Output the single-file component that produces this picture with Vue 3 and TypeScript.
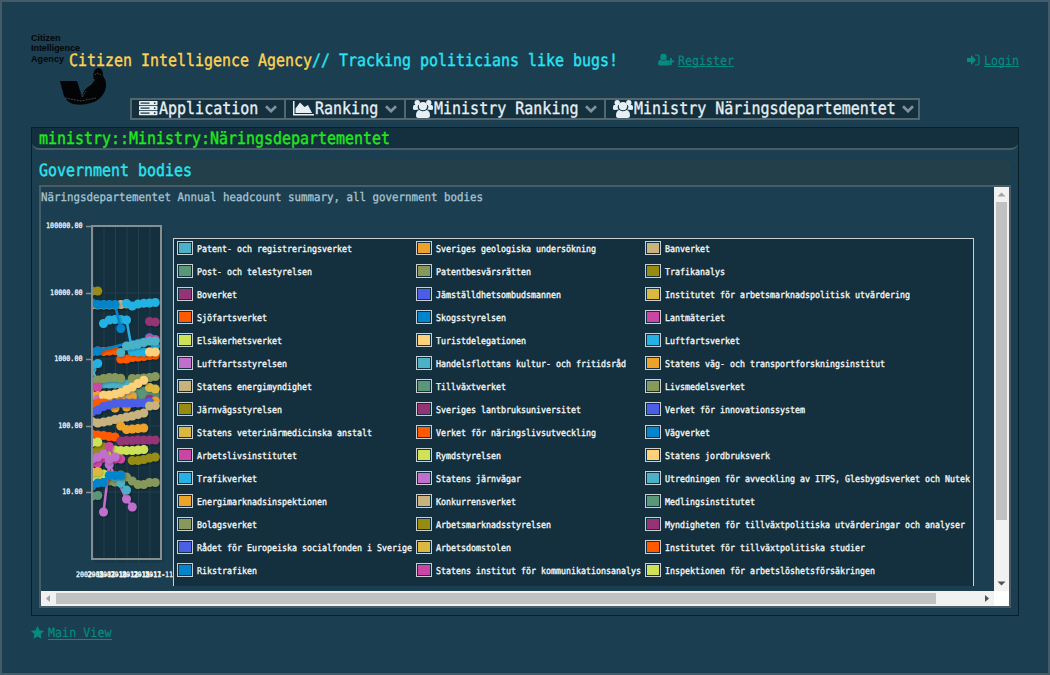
<script setup lang="ts">
import { h, type FunctionalComponent } from 'vue'

interface MonoProps { t: string; a: number; s: number; b?: number; y?: number; hgt?: number }

// Condensed monospace run: every character advances by exactly `a` pixels.
const Mono: FunctionalComponent<MonoProps> = (p) => {
  const w = p.t.length * p.a
  const height = p.hgt ?? 20
  return h('svg', { width: w, height, viewBox: `0 0 ${w} ${height}`, style: 'display:block;overflow:visible;flex:none' }, [
    h('text', {
      x: 0, y: p.y ?? 15, textLength: w, lengthAdjust: 'spacingAndGlyphs', fill: 'currentColor',
      stroke: 'currentColor', 'stroke-width': p.b ?? 0, 'font-size': p.s,
      'font-family': "'DejaVu Sans Mono', 'Liberation Mono', monospace", style: 'white-space:pre',
      'text-rendering': 'geometricPrecision',
    }, p.t),
  ])
}
Mono.props = ['t', 'a', 's', 'b', 'y', 'hgt']

const menu = [
  { label: 'Application', icon: 'server', w: 154 },
  { label: 'Ranking', icon: 'area', w: 120 },
  { label: 'Ministry Ranking', icon: 'group', w: 200 },
  { label: 'Ministry Näringsdepartementet', icon: 'group', w: 312 },
]

const palette = ['#4bb1c6', '#eda229', '#c8b37d', '#5a9678', '#86985a', '#968c12', '#943476', '#4b5ee6', '#dbb840', '#ff5a00', '#0285cd', '#cb46a4', '#cfe255', '#fdd07a', '#24b1e3', '#c070cc', '#4bb1c6', '#eda229', '#c8b37d', '#5a9678', '#86985a', '#968c12', '#943476', '#4b5ee6', '#dbb840', '#ff5a00', '#0285cd', '#cb46a4', '#cfe255', '#fdd07a', '#24b1e3', '#c070cc', '#4bb1c6', '#eda229', '#c8b37d', '#5a9678', '#86985a', '#968c12', '#943476', '#4b5ee6', '#dbb840', '#ff5a00', '#0285cd', '#cb46a4', '#cfe255']
const names = [
  'Patent- och registreringsverket', 'Sveriges geologiska undersökning', 'Banverket',
  'Post- och telestyrelsen', 'Patentbesvärsrätten', 'Trafikanalys',
  'Boverket', 'Jämställdhetsombudsmannen', 'Institutet för arbetsmarknadspolitisk utvärdering',
  'Sjöfartsverket', 'Skogsstyrelsen', 'Lantmäteriet',
  'Elsäkerhetsverket', 'Turistdelegationen', 'Luftfartsverket',
  'Luftfartsstyrelsen', 'Handelsflottans kultur- och fritidsråd', 'Statens väg- och transportforskningsinstitut',
  'Statens energimyndighet', 'Tillväxtverket', 'Livsmedelsverket',
  'Järnvägsstyrelsen', 'Sveriges lantbruksuniversitet', 'Verket för innovationssystem',
  'Statens veterinärmedicinska anstalt', 'Verket för näringslivsutveckling', 'Vägverket',
  'Arbetslivsinstitutet', 'Rymdstyrelsen', 'Statens jordbruksverk',
  'Trafikverket', 'Statens järnvägar', 'Utredningen för avveckling av ITPS, Glesbygdsverket och Nutek',
  'Energimarknadsinspektionen', 'Konkurrensverket', 'Medlingsinstitutet',
  'Bolagsverket', 'Arbetsmarknadsstyrelsen', 'Myndigheten för tillväxtpolitiska utvärderingar och analyser',
  'Rådet för Europeiska socialfonden i Sverige', 'Arbetsdomstolen', 'Institutet för tillväxtpolitiska studier',
  'Rikstrafiken', 'Statens institut för kommunikationsanalys', 'Inspektionen för arbetslöshetsförsäkringen',
]

type Point = [number, number]
const run = (start: number, ...ys: number[]): Point[] => ys.map((y, i) => [start + i, y])
const series: { c: string; p: Point[] }[] = [
  { c: '#968c12', p: run(0, 291, 291) },
  { c: '#c8b37d', p: run(0, 305, 305, 305, 305, 305, 304.5, 304) },
  { c: '#24b1e3', p: run(2, 323.5, 320, 319.5, 319.5, 320, 351.5, 352, 352, 352, 352) },
  { c: '#0285cd', p: run(0, 303, 304.5, 304.5, 304.5, 304.5, 328.5) },
  { c: '#24b1e3', p: run(6, 303.5, 306, 304, 303.3, 303, 302.5) },
  { c: '#943476', p: run(10, 321.5, 322) },
  { c: '#ff5a00', p: run(1, 351, 351.5, 351, 350.5, 359, 359, 357.5, 357, 356.5, 355.5, 355) },
  { c: '#0285cd', p: [[0, 352], [1, 351], [10, 337.5]] },
  { c: '#cb46a4', p: run(10, 338.5, 339.5) },
  { c: '#24b1e3', p: run(7, 351.5, 352, 352) },
  { c: '#24b1e3', p: run(11, 346) },
  { c: '#4bb1c6', p: run(5, 352.5, 346, 345, 344, 342.5, 341, 341) },
  { c: '#fdd07a', p: run(10, 352, 352) },
  { c: '#4bb1c6', p: run(0, 369, 383, 384, 384, 384, 384, 384) },
  { c: '#24b1e3', p: run(0, 365, 363.5) },
  { c: '#86985a', p: run(0, 381, 380, 378.5, 377.5, 377.5, 378.3) },
  { c: '#86985a', p: run(7, 378.5, 378.5, 378, 377.5, 376.5) },
  { c: '#cb46a4', p: run(0, 387, 387) },
  { c: '#5a9678', p: run(5, 399, 397, 395, 393, 391, 392, 394) },
  { c: '#5a9678', p: run(7, 400, 399, 397, 397, 398) },
  { c: '#c8b37d', p: run(5, 400, 398, 396) },
  { c: '#dbb840', p: run(10, 387.5, 389) },
  { c: '#eda229', p: run(0, 395.5, 395.5, 395, 397, 408, 397, 407, 398) },
  { c: '#c070cc', p: run(1, 399.5) },
  { c: '#fdd07a', p: run(2, 395.5, 395, 394, 392.5, 389.5, 387, 383.5, 380.3) },
  { c: '#943476', p: run(10, 399, 401) },
  { c: '#eda229', p: run(11, 401) },
  { c: '#ff5a00', p: run(0, 405, 403, 403) },
  { c: '#4b5ee6', p: run(0, 412, 410, 406.5, 405, 403.5, 403, 403, 403, 403, 403, 402) },
  { c: '#c8b37d', p: run(0, 421.5, 423, 422, 421, 419.5, 418.5, 417, 416, 414.5, 413, 406, 405.5) },
  { c: '#eda229', p: run(5, 426, 429.5, 429, 428.5, 428) },
  { c: '#ff5a00', p: run(0, 434, 435, 435.5, 436.5, 437) },
  { c: '#943476', p: run(5, 441, 440.5, 440.5, 440, 440, 440, 440) },
  { c: '#968c12', p: run(0, 452, 450, 447) },
  { c: '#cfe255', p: run(0, 442.5, 442) },
  { c: '#cfe255', p: run(3, 452, 450, 450.5, 450.5, 450.5, 450, 449.5) },
  { c: '#968c12', p: run(7, 460.5, 460.5, 459.5, 458, 457) },
  { c: '#cb46a4', p: run(0, 463, 463, 458, 446.5, 459, 459) },
  { c: '#cfe255', p: run(0, 477, 476, 474, 475) },
  { c: '#dbb840', p: run(0, 472, 471.5) },
  { c: '#86985a', p: run(3, 481, 482, 475, 477, 481, 484.5, 484.5, 482.5, 482.5) },
  { c: '#c070cc', p: [[2, 512], [3, 464.5], [6, 499], [7, 507]] },
  { c: '#c070cc', p: run(0, 459, 457, 454, 459, 457) },
  { c: '#4bb1c6', p: run(4, 477, 483, 490) },
  { c: '#5a9678', p: run(0, 496, 495.5) },
  { c: '#0285cd', p: run(0, 486, 483, 482.5, 475.5, 475.5, 475.5) },
]
const px = (i: number): number => 92 + 5.75 * i
const line = (p: Point[]): string => p.map(([i, y]) => `${px(i)},${y}`).join(' ')

const yLabels = [
  { t: '100000.00', y: 226 }, { t: '10000.00', y: 293 }, { t: '1000.00', y: 359 }, { t: '100.00', y: 426 }, { t: '10.00', y: 492 },
]
const years = ['2002', '2005', '2007', '2010', '2012', '2015', '2017']
const tickX = [93, 104, 115.5, 127, 138.5, 150, 161.5]
</script>

<template>
  <div class="page">
    <header class="head">
      <svg class="logo" width="80" height="80" viewBox="30 30 80 80">
        <g font-family="'Liberation Sans', Arial, sans-serif" font-weight="bold" font-size="9" fill="#020608">
          <text x="31" y="41" textLength="29.500">Citizen</text>
          <text x="31" y="51.300" textLength="49">Intelligence</text>
          <text x="31" y="61.500" textLength="33">Agency</text>
        </g>
        <path d="M60 81H77L82 97Q84 88 91 85L95 80Q92 77 94 72Q95 68 99 68Q103 69 103 76Q108 83 105 91Q101 99 94 102Q84 106 73 104Q67 102 64 96Z" fill="#020406" />
        <path d="M65 98L81 101L96 98M82 97L86 91M95 75L97 73L101 75" fill="none" stroke="#7e8b8c" stroke-width=".5" stroke-dasharray="2 1" />
      </svg>
      <h1 class="brand"><Mono class="gold" t="Citizen Intelligence Agency" :a="9" :s="17" :b="0.4" /><Mono t="// Tracking politicians like bugs!" :a="9" :s="17" :b="0.4" /></h1>
      <a class="link register">
        <svg width="16" height="14" viewBox="0 0 16 14" fill="currentColor"><circle cx="5.500" cy="4" r="3.200" /><path d="M2.500 6.500Q5.500 9 8.500 6.500Q9.600 7 10 9H11.500V12.500H1.500Q0 12.500 0 10.500Q.2 7 2.500 6.500Z" /><path d="M12 5H13.800V7.500H16V9.300H13.800V12H12V9.300H9.500V7.500H12Z" /></svg>
        <span><Mono t="Register" :a="7" :s="13" :y="12" :hgt="14" :b="0.2" /></span>
      </a>
      <a class="link login">
        <svg width="13" height="14" viewBox="0 0 13 14" fill="currentColor"><path d="M0 5H4V2L9 7L4 12V9H0Z" /><path d="M8 2H10.500Q12 2 12 3.500V10.500Q12 12 10.500 12H8" fill="none" stroke="currentColor" stroke-width="1.200" /></svg>
        <span><Mono t="Login" :a="7" :s="13" :y="12" :hgt="14" :b="0.2" /></span>
      </a>
    </header>

    <nav class="menu">
      <div v-for="m in menu" :key="m.label" class="item" :style="{ width: m.w + 'px' }">
        <svg v-if="m.icon === 'server'" width="20" height="18" viewBox="0 0 20 18"><g v-for="n in 3" :key="n"><rect x="0" :y="n * 5 - 4" width="18.500" height="4.200" rx=".6" fill="#e6eff4" /><path :d="`M1.500 ${n * 5 - 1.900}H10.500`" stroke="#14303e" stroke-width="1.200" /><circle cx="15.700" :cy="n * 5 - 1.900" r=".9" fill="#14303e" /></g></svg>
        <svg v-else-if="m.icon === 'area'" width="22" height="18" viewBox="0 0 22 18" fill="#e6eff4"><path d="M0 1H1.500V14H21V15.500H0Z" /><path d="M2.500 13V8.500L7 2.500L11.500 7L15 5L19 13Z" /></svg>
        <svg v-else width="20.500" height="18" viewBox="0 0 20.500 18" fill="#e6eff4"><circle cx="4.200" cy="2.700" r="2.700" /><circle cx="15.800" cy="2.700" r="2.700" /><path d="M0 9V7Q0 5 1.500 5H5Q4 8 6 9.500L2 10Q0 10 0 9ZM20 9V7Q20 5 18.500 5H15Q16 8 14 9.500L18 10Q20 10 20 9Z" /><circle cx="10" cy="6.200" r="4.100" /><path d="M6.500 10Q10 12.500 13.500 10Q17 10.500 17 15.500Q17 18 14.500 18H5.500Q3 18 3 15.500Q3 10.500 6.500 10Z" /></svg>
        <Mono :t="m.label" :a="9.03" :s="17" :b="0.35" :y="14.5" />
        <svg class="chev" width="12" height="8" viewBox="0 0 12 8"><path d="M1 1.300L6 6.200L11 1.300" fill="none" stroke="#7f929d" stroke-width="2.700" /></svg>
      </div>
    </nav>

    <main class="panel">
      <div class="caption"><Mono t="ministry::Ministry:Näringsdepartementet" :a="9" :s="17" :b="0.4" :y="15.5" /></div>
      <section class="body">
        <h2><Mono t="Government bodies" :a="9" :s="17" :b="0.4" :y="16" /></h2>
        <div class="scroller">
          <div class="view">
            <div class="title"><Mono t="Näringsdepartementet Annual headcount summary, all government bodies" :a="6.5" :s="11.8" :b="0.3" :y="14" /></div>
            <div class="chart">
              <svg width="132" height="379" viewBox="41 207 132 379">
                <defs>
                  <clipPath id="plot"><rect x="92" y="227" width="69" height="331" /></clipPath>
                  <filter id="shade" x="80" y="210" width="95" height="370" filterUnits="userSpaceOnUse"><feDropShadow dx="1" dy="1" stdDeviation="1" flood-color="#000" flood-opacity=".3" /></filter>
                </defs>
                <rect x="94" y="229" width="70" height="334" fill="#15313f" opacity=".55" />
                <rect x="92" y="226" width="69" height="333" fill="#14303e" />
                <path d="M92 293H160M92 359H160M92 426H160M92 492H160" stroke="#223f4a" />
                <path v-for="x in tickX" :key="x" :d="`M${x} 227V566`" stroke="#223f4a" />
                <g clip-path="url(#plot)">
                  <g v-for="(s, k) in series" :key="k" filter="url(#shade)">
                    <polyline :points="line(s.p)" fill="none" :stroke="s.c" stroke-width="2.500" />
                    <circle v-for="[i, y] in s.p" :key="i" :cx="px(i)" :cy="y" r="4.500" :fill="s.c" />
                  </g>
                </g>
                <rect x="92" y="226" width="69" height="333" fill="none" stroke="#878e92" stroke-width="2" />
                <g font-family="'DejaVu Sans Mono', monospace" font-size="7.500" fill="#f0f4f5" stroke="#f0f4f5" stroke-width=".3">
                  <g v-for="l in yLabels" :key="l.t">
                    <path :d="`M86 ${l.y}.5H92`" stroke="#878e92" stroke-width="1.500" />
                    <text :x="82.500 - l.t.length * 4.050" :y="l.y + 2.300" :textLength="l.t.length * 4.050" lengthAdjust="spacingAndGlyphs">{{ l.t }}</text>
                  </g>
                  <text v-for="(y, i) in years" :key="y" :x="76 + i * 11.500" y="577" textLength="32" lengthAdjust="spacingAndGlyphs">{{ y }}-11-</text>
                </g>
              </svg>
              <div class="legend">
                <div v-for="(n, i) in names" :key="n" class="entry">
                  <svg width="16" height="14" viewBox="0 0 16 14"><rect x=".5" y=".5" width="15" height="13" fill="none" stroke="#c9cfd2" /><rect x="2" y="2" width="12" height="10" :fill="palette[i]" /></svg>
                  <Mono :t="n" :a="5" :s="9.4" :b="0.35" :y="11" :hgt="14" />
                </div>
              </div>
            </div>
          </div>
          <div class="vbar">
            <svg width="15" height="15" viewBox="0 0 15 15"><path d="M3.500 9.500L7.500 5.500L11.500 9.500Z" fill="#a3a3a3" /></svg>
            <i />
            <svg width="15" height="15" viewBox="0 0 15 15"><path d="M3.500 5.500L7.500 9.500L11.500 5.500Z" fill="#505050" /></svg>
          </div>
          <div class="hbar">
            <svg width="15" height="15" viewBox="0 0 15 15"><path d="M9 4L5 7.500L9 11Z" fill="#a3a3a3" /></svg>
            <i />
            <svg width="15" height="15" viewBox="0 0 15 15"><path d="M6 4L10 7.500L6 11Z" fill="#505050" /></svg>
          </div>
          <div class="corner" />
        </div>
      </section>
    </main>

    <footer>
      <a class="link">
        <svg width="13" height="13" viewBox="0 0 13 13" fill="currentColor"><path d="M6.500 0L8.500 4.300L13 4.900L9.700 8.100L10.500 12.700L6.500 10.500L2.500 12.700L3.300 8.100L0 4.900L4.500 4.300Z" /></svg>
        <span><Mono t="Main View" :a="7.06" :s="13" :y="11.500" :hgt="14" :b="0.2" /></span>
      </a>
    </footer>
  </div>
</template>

<style>
body { margin: 0; background: #1b3d50; overflow: hidden; }
</style>

<style scoped>
.page { box-sizing: border-box; width: 1050px; height: 675px; border: 2px solid #445c69; background: #1b3e51; padding: 28px 29px 0; }
.head { position: relative; height: 68px; display: flex; align-items: flex-start; }
.logo { position: absolute; left: -1px; top: 0; }
.brand { display: flex; margin: 21px 0 0 38px; font-size: 16px; font-weight: normal; color: #28e5f2; position: relative; }
.gold { color: #ffd450; }
.link { display: flex; color: #058b80; gap: 4px; }
.link span { border-bottom: 1px solid #058b80; height: 13px; }
.register { margin: 23px 0 0 40px; }
.login { margin: 23px 0 0 auto; }
.menu { display: flex; width: max-content; margin-left: 99px; box-sizing: border-box; height: 22px; border: 2px solid #54676f; background: #14303e; color: #e6eff4; }
.item { box-sizing: border-box; display: flex; align-items: flex-start; padding-left: 7px; border-right: 2px solid #54676f; height: 18px; }
.item:last-child { border-right: 0; }
.chev { margin: 5px 0 0 7px; flex: none; }
.item :deep(svg) { flex: none; }
.panel { box-sizing: border-box; width: 988px; height: 489px; margin-top: 7px; border: 1px solid #08202c; }
.caption { height: 20px; padding-left: 7px; border-bottom: 2px solid #485d68; border-radius: 0 0 7px 7px; background: #14303e; color: #22e81c; }
.body { padding: 10px 7px 0; }
h2 { margin: 0; height: 25px; font-weight: normal; color: #28e5f2; background: #233f49; border-radius: 6px; }
.scroller { box-sizing: border-box; width: 972px; height: 423px; border: 2px solid #485d68; display: grid; grid-template-columns: 953px 15px; grid-template-rows: 404px 15px; }
.view { overflow: hidden; color: #a9c5d1; }
.title { height: 20px; }
.chart { display: flex; height: 379px; overflow: hidden; }
.chart > svg { flex: none; }
.legend { box-sizing: border-box; width: 801px; height: 348px; margin-top: 31px; padding: 2px 0 0 3px; overflow: hidden; border: 1px solid #c9cfd2; border-bottom: 0; background: #14303e; color: #f3f6f7; display: grid; grid-template-columns: 239px 229px 328px; grid-auto-rows: 23px; }
.entry { display: flex; gap: 4px; }
.vbar, .hbar { background: #f1f1f1; display: flex; }
.vbar { flex-direction: column; }
.vbar i { display: block; width: 11px; height: 318px; margin: 0 0 auto 2px; background: #c1c1c1; }
.hbar i { display: block; width: 880px; height: 11px; margin: 2px auto 0 0; background: #c1c1c1; }
.corner { background: #fff; }
footer { padding-top: 10px; }
</style>
